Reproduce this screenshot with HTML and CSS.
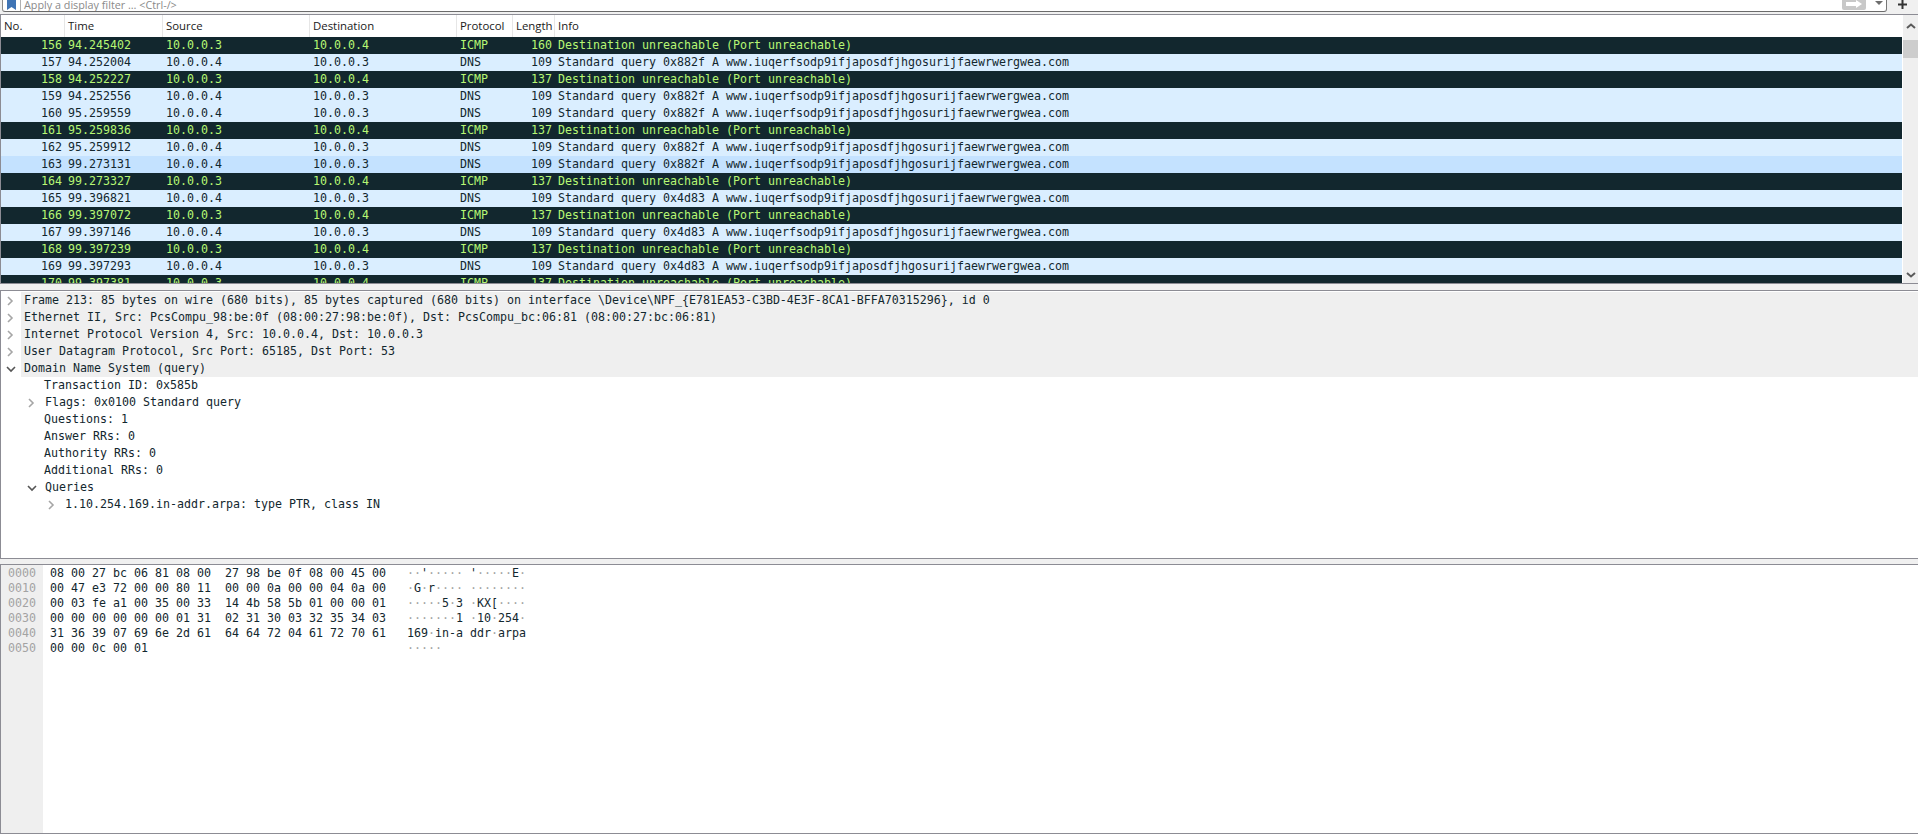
FILE: index.html
```html
<!DOCTYPE html>
<html lang="en">
<head>
    <meta charset="UTF-8">
    <title>Wireshark</title>
    <link rel="stylesheet" href="styles.css">
</head>
<body>
    <!-- display filter bar -->
    <div class="filter-bar">
        <div class="filter-box">
            <span class="filter-mark">
                <svg width="9" height="10" viewBox="0 0 9 10"><path d="M0 0H9V10L4.500 7L0 10Z" fill="#3f74b5"/></svg>
            </span>
            <span class="filter-text">Apply a display filter … &lt;Ctrl-/&gt;</span>
            <span class="filter-apply">
                <svg width="20" height="10" viewBox="0 0 20 10"><path d="M2 2H12V0L18 4L12 8V6H2Z" fill="#fff"/></svg>
            </span>
            <span class="filter-drop"></span>
        </div>
        <span class="filter-plus">
            <svg width="9" height="9" viewBox="0 0 9 9"><path d="M4.500 0V9M0 4.500H9" stroke="#333" stroke-width="2"/></svg>
        </span>
    </div>

    <!-- packet list -->
    <div class="packet-pane">
        <div class="packet-table">
            <div class="row head">
                <span>No.</span><span>Time</span><span>Source</span><span>Destination</span><span>Protocol</span><span>Length</span><span>Info</span>
            </div>
            <div class="row icmp"><span class="num">156</span><span>94.245402</span><span>10.0.0.3</span><span>10.0.0.4</span><span>ICMP</span><span class="num">160</span><span>Destination unreachable (Port unreachable)</span></div>
            <div class="row dns"><span class="num">157</span><span>94.252004</span><span>10.0.0.4</span><span>10.0.0.3</span><span>DNS</span><span class="num">109</span><span>Standard query 0x882f A www.iuqerfsodp9ifjaposdfjhgosurijfaewrwergwea.com</span></div>
            <div class="row icmp"><span class="num">158</span><span>94.252227</span><span>10.0.0.3</span><span>10.0.0.4</span><span>ICMP</span><span class="num">137</span><span>Destination unreachable (Port unreachable)</span></div>
            <div class="row dns"><span class="num">159</span><span>94.252556</span><span>10.0.0.4</span><span>10.0.0.3</span><span>DNS</span><span class="num">109</span><span>Standard query 0x882f A www.iuqerfsodp9ifjaposdfjhgosurijfaewrwergwea.com</span></div>
            <div class="row dns"><span class="num">160</span><span>95.259559</span><span>10.0.0.4</span><span>10.0.0.3</span><span>DNS</span><span class="num">109</span><span>Standard query 0x882f A www.iuqerfsodp9ifjaposdfjhgosurijfaewrwergwea.com</span></div>
            <div class="row icmp"><span class="num">161</span><span>95.259836</span><span>10.0.0.3</span><span>10.0.0.4</span><span>ICMP</span><span class="num">137</span><span>Destination unreachable (Port unreachable)</span></div>
            <div class="row dns"><span class="num">162</span><span>95.259912</span><span>10.0.0.4</span><span>10.0.0.3</span><span>DNS</span><span class="num">109</span><span>Standard query 0x882f A www.iuqerfsodp9ifjaposdfjhgosurijfaewrwergwea.com</span></div>
            <div class="row dns hover"><span class="num">163</span><span>99.273131</span><span>10.0.0.4</span><span>10.0.0.3</span><span>DNS</span><span class="num">109</span><span>Standard query 0x882f A www.iuqerfsodp9ifjaposdfjhgosurijfaewrwergwea.com</span></div>
            <div class="row icmp"><span class="num">164</span><span>99.273327</span><span>10.0.0.3</span><span>10.0.0.4</span><span>ICMP</span><span class="num">137</span><span>Destination unreachable (Port unreachable)</span></div>
            <div class="row dns"><span class="num">165</span><span>99.396821</span><span>10.0.0.4</span><span>10.0.0.3</span><span>DNS</span><span class="num">109</span><span>Standard query 0x4d83 A www.iuqerfsodp9ifjaposdfjhgosurijfaewrwergwea.com</span></div>
            <div class="row icmp"><span class="num">166</span><span>99.397072</span><span>10.0.0.3</span><span>10.0.0.4</span><span>ICMP</span><span class="num">137</span><span>Destination unreachable (Port unreachable)</span></div>
            <div class="row dns"><span class="num">167</span><span>99.397146</span><span>10.0.0.4</span><span>10.0.0.3</span><span>DNS</span><span class="num">109</span><span>Standard query 0x4d83 A www.iuqerfsodp9ifjaposdfjhgosurijfaewrwergwea.com</span></div>
            <div class="row icmp"><span class="num">168</span><span>99.397239</span><span>10.0.0.3</span><span>10.0.0.4</span><span>ICMP</span><span class="num">137</span><span>Destination unreachable (Port unreachable)</span></div>
            <div class="row dns"><span class="num">169</span><span>99.397293</span><span>10.0.0.4</span><span>10.0.0.3</span><span>DNS</span><span class="num">109</span><span>Standard query 0x4d83 A www.iuqerfsodp9ifjaposdfjhgosurijfaewrwergwea.com</span></div>
            <div class="row icmp"><span class="num">170</span><span>99.397381</span><span>10.0.0.3</span><span>10.0.0.4</span><span>ICMP</span><span class="num">137</span><span>Destination unreachable (Port unreachable)</span></div>
        </div>
        <div class="scrollbar">
            <svg class="arrow-up" width="10" height="6" viewBox="0 0 10 6"><path d="M1 5L5 1.500L9 5" fill="none" stroke="#5a5a5a" stroke-width="2"/></svg>
            <div class="thumb"></div>
            <svg class="arrow-down" width="10" height="6" viewBox="0 0 10 6"><path d="M1 1L5 4.500L9 1" fill="none" stroke="#5a5a5a" stroke-width="2"/></svg>
        </div>
    </div>

    <!-- packet details -->
    <div class="detail-pane">
        <div class="tree-row top"><svg class="chev" viewBox="0 0 8 10"><path d="M2 1L6 5L2 9" /></svg><span>Frame 213: 85 bytes on wire (680 bits), 85 bytes captured (680 bits) on interface \Device\NPF_{E781EA53-C3BD-4E3F-8CA1-BFFA70315296}, id 0</span></div>
        <div class="tree-row top"><svg class="chev" viewBox="0 0 8 10"><path d="M2 1L6 5L2 9" /></svg><span>Ethernet II, Src: PcsCompu_98:be:0f (08:00:27:98:be:0f), Dst: PcsCompu_bc:06:81 (08:00:27:bc:06:81)</span></div>
        <div class="tree-row top"><svg class="chev" viewBox="0 0 8 10"><path d="M2 1L6 5L2 9" /></svg><span>Internet Protocol Version 4, Src: 10.0.0.4, Dst: 10.0.0.3</span></div>
        <div class="tree-row top"><svg class="chev" viewBox="0 0 8 10"><path d="M2 1L6 5L2 9" /></svg><span>User Datagram Protocol, Src Port: 65185, Dst Port: 53</span></div>
        <div class="tree-row top"><svg class="chev open" viewBox="0 0 10 8"><path d="M1 2L5 6L9 2" /></svg><span>Domain Name System (query)</span></div>
        <div class="tree-row lvl1"><span>Transaction ID: 0x585b</span></div>
        <div class="tree-row lvl1 has-chev"><svg class="chev" viewBox="0 0 8 10"><path d="M2 1L6 5L2 9" /></svg><span>Flags: 0x0100 Standard query</span></div>
        <div class="tree-row lvl1"><span>Questions: 1</span></div>
        <div class="tree-row lvl1"><span>Answer RRs: 0</span></div>
        <div class="tree-row lvl1"><span>Authority RRs: 0</span></div>
        <div class="tree-row lvl1"><span>Additional RRs: 0</span></div>
        <div class="tree-row lvl1 has-chev"><svg class="chev open" viewBox="0 0 10 8"><path d="M1 2L5 6L9 2" /></svg><span>Queries</span></div>
        <div class="tree-row lvl2"><svg class="chev" viewBox="0 0 8 10"><path d="M2 1L6 5L2 9" /></svg><span>1.10.254.169.in-addr.arpa: type PTR, class IN</span></div>
    </div>

    <!-- packet bytes -->
    <div class="hex-pane">
        <div class="hex-offsets">
            <div>0000</div>
            <div>0010</div>
            <div>0020</div>
            <div>0030</div>
            <div>0040</div>
            <div>0050</div>
        </div>
        <div class="hex-dump">
            <div>08 00 27 bc 06 81 08 00  27 98 be 0f 08 00 45 00   <i>··</i>'<i>·····</i> '<i>·····</i>E<i>·</i></div>
            <div>00 47 e3 72 00 00 80 11  00 00 0a 00 00 04 0a 00   <i>·</i>G<i>·</i>r<i>····</i> <i>········</i></div>
            <div>00 03 fe a1 00 35 00 33  14 4b 58 5b 01 00 00 01   <i>·····</i>5<i>·</i>3 <i>·</i>KX[<i>····</i></div>
            <div>00 00 00 00 00 00 01 31  02 31 30 03 32 35 34 03   <i>·······</i>1 <i>·</i>10<i>·</i>254<i>·</i></div>
            <div>31 36 39 07 69 6e 2d 61  64 64 72 04 61 72 70 61   169<i>·</i>in-a ddr<i>·</i>arpa</div>
            <div>00 00 0c 00 01                                     <i>·····</i></div>
        </div>
    </div>
</body>
</html>
```

FILE: styles.css
```css
:root {
    --mono: 'DejaVu Sans Mono', monospace;
    --pane-border: #8c8c94;
    --chrome: #f0f0f0;
    --dark-row: #12272e;
    --light-row: #daeeff;
}

html, body {
    height: 100%;
}

body {
    margin: 0;
    height: 834px;
    overflow: hidden;
    display: flex;
    flex-direction: column;
    background: var(--chrome);
    color: #12272e;
    font-family: var(--mono);
    font-size: 11.63px;
}

/* filter bar, top of it is cut off in the shot */
.filter-bar {
    height: 12px;
    display: flex;
    align-items: flex-end;
    padding-left: 2px;
    flex-shrink: 0;
}

.filter-box {
    flex: 1;
    height: 12px;
    box-sizing: border-box;
    display: flex;
    align-items: flex-end;
    background: white;
    border-left: 1px solid #8a8a8a;
    border-right: 1px solid #777;
    border-bottom: 1px solid #6b6b6b;
    border-radius: 0 0 3px 3px;
    overflow: hidden;
}

.filter-mark {
    width: 18px;
    height: 11px;
    padding-left: 3px;
    box-sizing: border-box;
    border-right: 1px solid #b0b0b0;
    flex-shrink: 0;
}

.filter-mark svg {
    display: block;
    margin-left: 1px;
}

.filter-text {
    flex: 1;
    align-self: flex-start;
    padding-left: 3px;
    font-family: 'Open Sans', sans-serif;
    font-size: 10.8px;
    line-height: 9px;
    color: #8a8a8a;
}

.filter-apply {
    width: 24px;
    height: 10px;
    background: #c8c8c8;
    border-radius: 0 0 2px 2px;
    display: flex;
    justify-content: center;
    margin-right: 6px;
    margin-bottom: 1px;
}

.filter-drop {
    width: 0;
    height: 0;
    border: 4px solid transparent;
    border-top: 4px solid #6e6e6e;
    border-bottom: none;
    margin: 0 3px 6px 3px;
}

.filter-plus {
    width: 31px;
    height: 12px;
    display: flex;
    justify-content: center;
    align-items: flex-start;
}

/* packet list */
.packet-pane {
    margin-top: 2px;
    height: 270px;
    flex-shrink: 0;
    display: flex;
    box-sizing: border-box;
    background: white;
    border-top: 1px solid var(--pane-border);
    border-bottom: 1px solid var(--pane-border);
    border-left: 1px solid var(--pane-border);
    overflow: hidden;
}

.packet-table {
    flex: 1;
    min-width: 0;
}

.row {
    display: grid;
    grid-template-columns: 63px 98px 147px 147px 56px 42px 1fr;
    height: 17px;
    line-height: 17px;
    white-space: pre;
}

.row span {
    padding-left: 4px;
    overflow: hidden;
}

.row span.num {
    padding-left: 0;
    padding-right: 2px;
    text-align: right;
}

.row.head {
    height: 22px;
    line-height: 22px;
    font-family: 'Open Sans', sans-serif;
    font-size: 11.4px;
    color: #1a1a1a;
}

.row.head span {
    padding-left: 3px;
    border-left: 1px solid #e6e6e6;
}

.row.head span:first-child {
    border-left: none;
}

.icmp {
    background: var(--dark-row);
    color: #b7f774;
}

.dns {
    background: var(--light-row);
    color: #12272e;
}

.dns.hover {
    background: #c4e2ff;
}

.scrollbar {
    width: 15px;
    margin-left: 1px;
    flex-shrink: 0;
    display: flex;
    flex-direction: column;
    align-items: center;
    background: #efefef;
}

.arrow-up {
    margin-top: 8px;
}

.thumb {
    width: 100%;
    height: 18px;
    margin-top: 11px;
    background: #cdcdcd;
}

.arrow-down {
    margin-top: auto;
    margin-bottom: 5px;
}

/* packet details */
.detail-pane {
    margin-top: 6px;
    height: 269px;
    padding-top: 1px;
    flex-shrink: 0;
    box-sizing: border-box;
    background: white;
    border-top: 1px solid var(--pane-border);
    border-bottom: 1px solid var(--pane-border);
    border-left: 1px solid var(--pane-border);
    overflow: hidden;
}

.tree-row {
    height: 17px;
    line-height: 17px;
    display: flex;
    align-items: center;
    white-space: pre;
}

.tree-row.top {
    background: linear-gradient(to right, white 20px, #efefef 20px);
    padding-left: 5px;
}

.tree-row.top > span {
    margin-left: 5px;
}

.tree-row.lvl1 {
    padding-left: 43px;
}

.tree-row.lvl1.has-chev {
    padding-left: 26px;
}

.tree-row.lvl1.has-chev > span {
    margin-left: 5px;
}

.tree-row.lvl2 {
    padding-left: 46px;
}

.tree-row.lvl2 > span {
    margin-left: 5px;
}

.chev {
    width: 8px;
    height: 10px;
    flex-shrink: 0;
    margin-right: 5px;
}

.chev path {
    fill: none;
    stroke: #a6a6a6;
    stroke-width: 1.6;
}

.chev.open {
    width: 10px;
    height: 8px;
    margin-right: 3px;
}

.chev.open path {
    stroke: #555;
}

/* packet bytes */
.hex-pane {
    margin-top: 5px;
    flex: 1;
    display: flex;
    box-sizing: border-box;
    background: white;
    border-top: 1px solid var(--pane-border);
    border-bottom: 1px solid var(--pane-border);
    border-left: 1px solid var(--pane-border);
    line-height: 15px;
}

.hex-offsets {
    width: 35px;
    padding: 1px 0 0 7px;
    background: #efefef;
    color: #a3a3a3;
}

.hex-dump {
    padding: 1px 0 0 7px;
}

.hex-dump div {
    white-space: pre;
}

.hex-dump i {
    font-style: normal;
    color: #a3a3a3;
}
```
